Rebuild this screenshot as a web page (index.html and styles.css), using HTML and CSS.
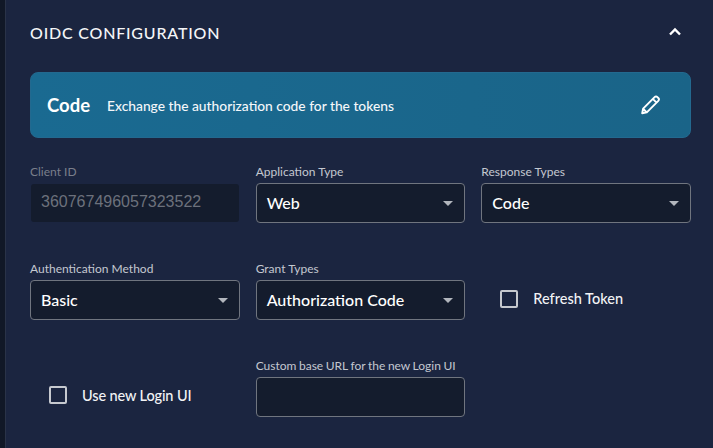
FILE: index.html
```html
<!DOCTYPE html>
<html lang="en">
<head>
<meta charset="utf-8">
<title>OIDC Configuration</title>
<link rel="stylesheet" href="styles.css">
</head>
<body>
<div class="page">
  <div class="rail"></div>
  <section class="card">
    <header class="head">
      <h2 class="title">OIDC CONFIGURATION</h2>
      <svg class="chevron" width="24" height="24" viewBox="0 0 24 24"><path d="M7 14.5l5-5 5 5" fill="none" stroke="#fff" stroke-width="2.4"/></svg>
    </header>
    <div class="banner">
      <span class="banner-name">Code</span>
      <span class="banner-desc">Exchange the authorization code for the tokens</span>
      <svg class="pencil" width="24" height="24" viewBox="0 0 24 24"><path d="M4.2 20.2l.9-4.6L16.6 4.1c.8-.8 2-.8 2.8 0l.9.9c.8.8.8 2 0 2.8L8.8 19.3zM5.1 15.6l3.7 3.7M14.8 5.9l3.7 3.7" fill="none" stroke="#fff" stroke-width="1.9" stroke-linejoin="round"/></svg>
    </div>
    <div class="form">
      <div class="field">
        <label class="label label-dim">Client ID</label>
        <div class="control control-disabled">360767496057323522</div>
      </div>
      <div class="field">
        <label class="label">Application Type</label>
        <div class="control">Web<span class="caret"></span></div>
      </div>
      <div class="field">
        <label class="label">Response Types</label>
        <div class="control">Code<span class="caret"></span></div>
      </div>
      <div class="field">
        <label class="label">Authentication Method</label>
        <div class="control">Basic<span class="caret"></span></div>
      </div>
      <div class="field">
        <label class="label">Grant Types</label>
        <div class="control">Authorization Code<span class="caret"></span></div>
      </div>
      <div class="check check-refresh">
        <span class="box"></span>
        <span class="check-text">Refresh Token</span>
      </div>
      <div class="check check-login">
        <span class="box"></span>
        <span class="check-text check-text-tight">Use new Login UI</span>
      </div>
      <div class="field">
        <label class="label label-tight">Custom base URL for the new Login UI</label>
        <div class="control"></div>
      </div>
    </div>
  </section>
</div>
</body>
</html>
```
FILE: styles.css
```css
* { box-sizing: border-box; }
html, body { margin: 0; height: 100%; }
body {
  background: #1b2540;
  font-family: Lato, "Open Sans", sans-serif;
  color: #fff;
  overflow: hidden;
}
.page { display: flex; height: 448px; }
.rail {
  width: 6px;
  flex: none;
  background: #111827;
  border-right: 1px solid #2a3348;
}
.card {
  flex: 1;
  padding: 0 22px 0 24px;
  background: #1b2540;
}
.head {
  height: 72px;
  display: flex;
  align-items: center;
  justify-content: space-between;
  padding-bottom: 7px;
}
.title {
  margin: 0;
  font-size: 16px;
  font-weight: 500;
  letter-spacing: 0.8px;
  color: #f5f6f8;
}
.chevron { margin-right: 4px; margin-top: -2px; }
.banner {
  height: 66px;
  display: flex;
  align-items: center;
  padding: 0 28px 0 16px;
  border-radius: 8px;
  border: 1px solid #23698f;
  background: linear-gradient(90deg, #1a6a91, #1a6488);
}
.banner-name { font-size: 18.5px; font-weight: 700; margin-right: 17px; }
.banner-desc { font-size: 13.8px; font-weight: 500; flex: 1; color: #f4f7fa; }
.pencil { flex: none; }
.form {
  display: grid;
  grid-template-columns: repeat(3, 1fr);
  column-gap: 16px;
  row-gap: 39px;
  margin-top: 27px;
}
.field { display: flex; flex-direction: column; }
.label {
  height: 18px;
  font-size: 12px;
  line-height: 14px;
  color: #c4c8d0;
}
.label-dim { color: #7a7f8b; }
.label-tight { word-spacing: -0.5px; }
.control {
  position: relative;
  height: 40px;
  padding: 0 10px 2px;
  display: flex;
  align-items: center;
  font-size: 16px;
  font-weight: 500;
  background: #141c2d;
  border: 1px solid #70757f;
  border-radius: 4px;
  color: #fff;
}
.control-disabled {
  border-color: transparent;
  background-clip: padding-box;
  color: #6c717c;
  font-family: "Liberation Sans", Arial, sans-serif;
  font-weight: 400;
}
.caret {
  position: absolute;
  right: 11px;
  top: 17px;
  border-left: 5px solid transparent;
  border-right: 5px solid transparent;
  border-top: 5px solid #b2b6bd;
}
.check { display: flex; align-items: center; gap: 15px; }
.box {
  width: 18px;
  height: 18px;
  border: 2px solid #c6c9cf;
  border-radius: 2px;
  flex: none;
}
.check-text { font-size: 14.5px; line-height: 17px; font-weight: 500; color: #f2f3f5; }
.check-text-tight { letter-spacing: -0.12px; }
.check-refresh { padding: 28px 0 0 19px; height: 58px; align-items: flex-start; }
.check-login { padding: 14px 0 0 19px; align-self: center; }
```
